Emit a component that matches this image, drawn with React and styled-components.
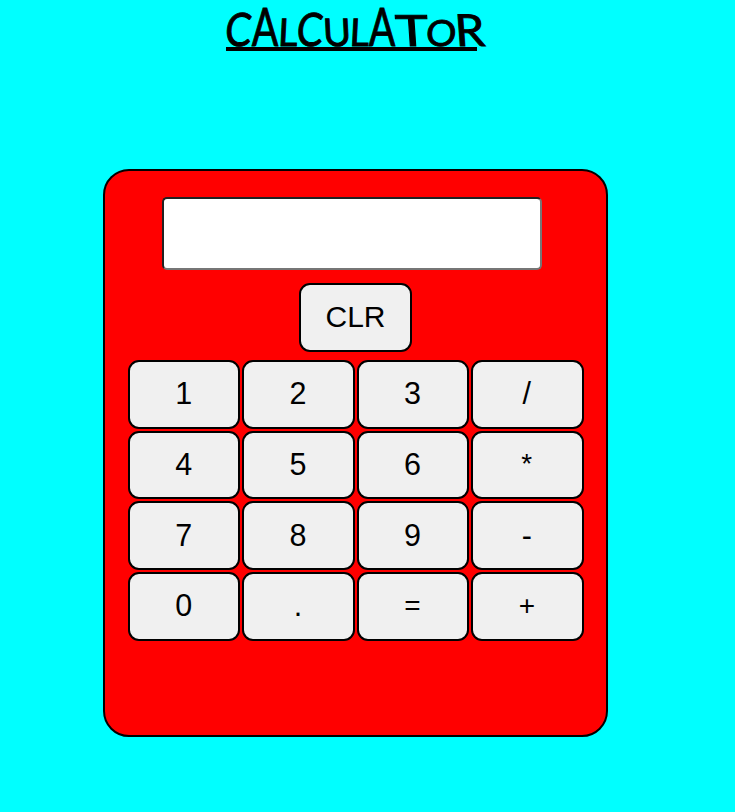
import React from "react";
import styled, { createGlobalStyle } from "styled-components";

const GlobalStyle = createGlobalStyle`
  *, *::before, *::after { box-sizing: border-box; }
  body {
    margin: 0;
    background: #00ffff;
    color: #000;
    font-family: "Liberation Sans", Arial, sans-serif;
  }
`;

const Page = styled.main`
  display: flex;
  flex-direction: column;
  align-items: flex-start;
  height: 812px;
`;

const Title = styled.h1`
  display: flex;
  align-items: baseline;
  width: 251px;
  height: 51px;
  margin: 0 0 118px 226px;
  border-bottom: 4px solid #000;
  font: 400 46px/52px Lato, sans-serif;
  -webkit-text-stroke: 0.9px #000;
  white-space: nowrap;
`;

const Letter = styled.span`
  display: flex;
  flex: none;
  justify-content: center;
  width: ${(p) => p.$width}px;
  font-size: ${(p) => p.$size}px;
  transform: scaleX(${(p) => p.$stretch}) skewX(${(p) => p.$lean}deg);
`;

const Body = styled.section`
  display: flex;
  flex-direction: column;
  width: 505px;
  height: 568px;
  margin-left: 103px;
  padding: 26px 0 0 22.9px;
  background: #ff0000;
  border: 2px solid #000;
  border-radius: 26px;
`;

const Display = styled.input`
  flex: none;
  width: 380px;
  height: 73px;
  margin: 0 0 13px 34.1px;
  padding: 1px 8px;
  background: #fff;
  border: 2px inset #767676;
  border-radius: 5px;
  outline: none;
  font: 30px "Liberation Sans", Arial, sans-serif;
`;

const Key = styled.button`
  width: 112.5px;
  height: 68.6px;
  padding: 0 1px 1px 0;
  background: #f0f0f0;
  border: 2px solid #000;
  border-radius: 11px;
  color: #000;
  font: ${(p) => (p.$symbol ? 28 : 30.5)}px "Liberation Sans", Arial, sans-serif;
`;

const ClearKey = styled(Key)`
  flex: none;
  width: 113px;
  height: 69px;
  margin: 0 0 8px 171.1px;
  padding: 0 0 2px;
  font-size: 30px;
`;

const Keypad = styled.div`
  display: grid;
  grid-template-columns: repeat(4, 112.5px);
  grid-auto-rows: 68.6px;
  gap: 2.1px 1.9px;
`;

const titleLetters = [
  { char: "C", width: 25, size: 46, stretch: 0.85, lean: -6 },
  { char: "A", width: 28, size: 53, stretch: 0.74, lean: 0 },
  { char: "L", width: 18, size: 38, stretch: 1, lean: -3 },
  { char: "C", width: 26, size: 46, stretch: 0.85, lean: -6 },
  { char: "U", width: 28, size: 38, stretch: 1, lean: 3 },
  { char: "L", width: 17, size: 38, stretch: 1, lean: -3 },
  { char: "A", width: 28, size: 53, stretch: 0.74, lean: 0 },
  { char: "T", width: 32, size: 43, stretch: 1.3, lean: 3 },
  { char: "O", width: 27, size: 36, stretch: 1.05, lean: -3 },
  { char: "R", width: 29, size: 44, stretch: 1.08, lean: 4 },
];

const keys = ["1", "2", "3", "/", "4", "5", "6", "*", "7", "8", "9", "-", "0", ".", "=", "+"];
const symbols = ["*", "=", "+"];

export default function App() {
  return (
    <>
      <GlobalStyle />
      <Page>
        <Title>
          {titleLetters.map(({ char, width, size, stretch, lean }, index) => (
            <Letter key={index} $width={width} $size={size} $stretch={stretch} $lean={lean}>
              {char}
            </Letter>
          ))}
        </Title>
        <Body>
          <Display type="text" aria-label="Result" />
          <ClearKey type="button">CLR</ClearKey>
          <Keypad>
            {keys.map((label) => (
              <Key key={label} type="button" $symbol={symbols.includes(label)}>
                {label}
              </Key>
            ))}
          </Keypad>
        </Body>
      </Page>
    </>
  );
}
